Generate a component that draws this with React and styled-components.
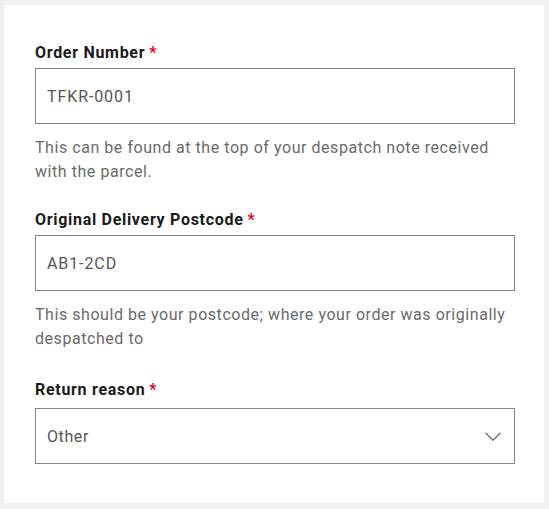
import React from "react";
import styled, { createGlobalStyle } from "styled-components";

const GlobalStyle = createGlobalStyle`
  html, body {
    margin: 0;
    padding: 0;
    background: #f0f0f0;
  }
  body {
    font-family: Roboto, "Liberation Sans", sans-serif;
  }
`;

const Page = styled.div`
  padding: 5px 5px 6px 4px;
`;

const Card = styled.form`
  background: #ffffff;
  padding: 36px 29px 39px 31px;
  display: flex;
  flex-direction: column;
  gap: 24px;
`;

const Field = styled.div`
  display: flex;
  flex-direction: column;
  margin-top: ${(props) => (props.$extra ? "3px" : "0")};
`;

const Label = styled.label`
  font-size: 16px;
  font-weight: 700;
  line-height: 24px;
  letter-spacing: 0.7px;
  color: #1a1a1a;
  margin-bottom: 3px;
`;

const Star = styled.span`
  color: #e4002b;
  margin-left: 4px;
`;

const Input = styled.input`
  box-sizing: border-box;
  width: 100%;
  height: 56px;
  border: 1px solid #858585;
  border-radius: 0;
  padding: 0 11px;
  font-family: Roboto, "Liberation Sans", sans-serif;
  font-size: 16px;
  letter-spacing: 0.9px;
  color: #555555;
  background: #fff;
  outline: none;
`;

const Help = styled.p`
  margin: 12px 0 0;
  font-size: 16px;
  line-height: 24px;
  letter-spacing: 0.55px;
  color: #6a6a6a;
`;

const SelectBox = styled.div`
  box-sizing: border-box;
  height: 56px;
  margin-top: 3px;
  border: 1px solid #858585;
  padding: 0 13px 0 11px;
  display: flex;
  align-items: center;
  justify-content: space-between;
  font-size: 16px;
  letter-spacing: 0.6px;
  color: #555555;
`;

const Chevron = () => (
  <svg width="16" height="9" viewBox="0 0 16 9" fill="none">
    <path d="M0.5 0.8l7.5 7.5 7.5-7.5" stroke="#6a6a6a" strokeWidth="1.3" />
  </svg>
);

export default function App() {
  return (
    <Page>
      <GlobalStyle />
      <Card>
        <Field>
          <Label>
            Order Number<Star>*</Star>
          </Label>
          <Input defaultValue="TFKR-0001" />
          <Help>
            This can be found at the top of your despatch note received with
            the parcel.
          </Help>
        </Field>
        <Field>
          <Label>
            Original Delivery Postcode<Star>*</Star>
          </Label>
          <Input defaultValue="AB1-2CD" />
          <Help>
            This should be your postcode; where your order was originally
            despatched to
          </Help>
        </Field>
        <Field $extra>
          <Label>
            Return reason<Star>*</Star>
          </Label>
          <SelectBox>
            <span>Other</span>
            <Chevron />
          </SelectBox>
        </Field>
      </Card>
    </Page>
  );
}
